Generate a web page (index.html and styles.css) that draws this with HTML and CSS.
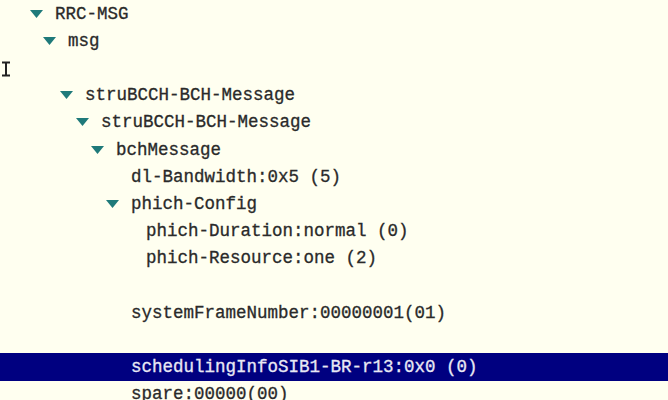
FILE: index.html
```html
<!DOCTYPE html>
<html lang="en">
  <head>
    <meta charset="UTF-8" />
    <title>RRC-MSG</title>
    <link rel="stylesheet" href="styles.css">
  </head>
  <body>
    <div class="tree">
      <div class="row" style="padding-left: 30px">
        <svg class="twisty" viewBox="0 0 13 8"><polygon points="0,0 13,0 6.5,8" /></svg>
        <span class="label">RRC-MSG</span>
      </div>
      <div class="row" style="padding-left: 43px">
        <svg class="twisty" viewBox="0 0 13 8"><polygon points="0,0 13,0 6.5,8" /></svg>
        <span class="label">msg</span>
      </div>
      <div class="row cursor-row">
        <svg class="ibeam" viewBox="0 0 10 16">
          <path d="M1 1.5h8M5 1.5v13M1 14.5h8" />
        </svg>
      </div>
      <div class="row" style="padding-left: 60px">
        <svg class="twisty" viewBox="0 0 13 8"><polygon points="0,0 13,0 6.5,8" /></svg>
        <span class="label">struBCCH-BCH-Message</span>
      </div>
      <div class="row" style="padding-left: 76px">
        <svg class="twisty" viewBox="0 0 13 8"><polygon points="0,0 13,0 6.5,8" /></svg>
        <span class="label">struBCCH-BCH-Message</span>
      </div>
      <div class="row" style="padding-left: 91px">
        <svg class="twisty" viewBox="0 0 13 8"><polygon points="0,0 13,0 6.5,8" /></svg>
        <span class="label">bchMessage</span>
      </div>
      <div class="row" style="padding-left: 106px">
        <span class="leaf"></span>
        <span class="label">dl-Bandwidth:0x5 (5)</span>
      </div>
      <div class="row" style="padding-left: 106px">
        <svg class="twisty" viewBox="0 0 13 8"><polygon points="0,0 13,0 6.5,8" /></svg>
        <span class="label">phich-Config</span>
      </div>
      <div class="row" style="padding-left: 121px">
        <span class="leaf"></span>
        <span class="label">phich-Duration:normal (0)</span>
      </div>
      <div class="row" style="padding-left: 121px">
        <span class="leaf"></span>
        <span class="label">phich-Resource:one (2)</span>
      </div>
      <div class="row"></div>
      <div class="row" style="padding-left: 106px">
        <span class="leaf"></span>
        <span class="label">systemFrameNumber:00000001(01)</span>
      </div>
      <div class="row"></div>
      <div class="row selected" style="padding-left: 106px">
        <span class="leaf"></span>
        <span class="label">schedulingInfoSIB1-BR-r13:0x0 (0)</span>
      </div>
      <div class="row" style="padding-left: 106px">
        <span class="leaf"></span>
        <span class="label">spare:00000(00)</span>
      </div>
    </div>
  </body>
</html>
```

FILE: styles.css
```css
body {
  margin: 0;
  background: #fffff0;
  color: #2a2a2a;
  font-family: "Liberation Mono", "Courier New", monospace;
  font-size: 17.5px;
  overflow: hidden;
}
.row {
  display: flex;
  align-items: center;
  height: 27.2px;
  white-space: nowrap;
}
.twisty {
  width: 13px;
  height: 8px;
  margin-right: 12px;
  flex: none;
}
.twisty polygon {
  fill: #1f7a7a;
}
.leaf {
  width: 25px;
  flex: none;
}
.label {
  -webkit-text-stroke: 0.3px #2a2a2a;
}
.cursor-row {
  padding-left: 1px;
}
.ibeam {
  width: 10px;
  height: 16px;
  margin-top: 3px;
}
.ibeam path {
  stroke: #222;
  stroke-width: 2;
  fill: none;
}
.selected {
  background: #000080;
  color: #e8e8f4;
}
.selected .label {
  -webkit-text-stroke: 0.3px #e8e8f4;
}
```
